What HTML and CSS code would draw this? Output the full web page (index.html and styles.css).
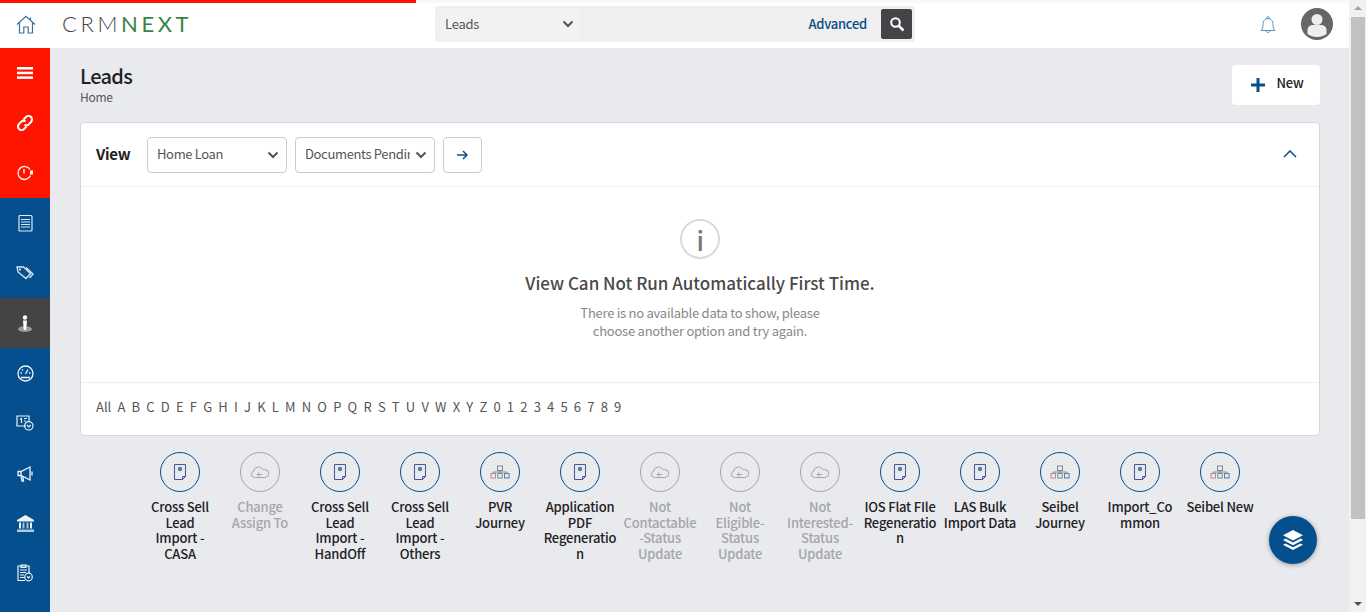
FILE: index.html
```html
<!DOCTYPE html>
<html lang="en">
<head>
    <meta charset="UTF-8">
    <title>Leads</title>
    <link rel="stylesheet" href="styles.css">
</head>
<body>
    <svg class="sprites" width="0" height="0">
        <symbol id="i-doc" viewBox="0 0 16 18">
            <path d="M2.500 1.500h11v12l-3 3h-8z" fill="none" stroke="currentColor" stroke-width="1"/>
            <path d="M13.500 13.500h-3v3" fill="none" stroke="currentColor" stroke-width="1"/>
            <circle cx="8" cy="6" r="2.200" fill="#4a7fae"/>
        </symbol>
        <symbol id="i-cloud" viewBox="0.600 0 20 14">
            <path d="M5 12.500a3.200 3.200 0 0 1-.6-6.300 4.600 4.600 0 0 1 8.800-1.600 3.400 3.400 0 0 1 2.200 0 3.900 3.900 0 0 1 .1 7.900z" fill="none" stroke="currentColor" stroke-width="1"/>
            <path d="M7 9.500h6M10 7.500l-2 2 2 2" fill="none" stroke="currentColor" stroke-width="1"/>
        </symbol>
        <symbol id="i-org" viewBox="0 0 20 14">
            <g fill="none" stroke-width="1">
                <rect x="7.500" y="1" width="5" height="4.500" stroke="#7d8794"/>
                <rect x="1" y="8.500" width="4.500" height="4.500" stroke="#c08a7a"/>
                <rect x="7.800" y="8.500" width="4.500" height="4.500" stroke="#7d8794"/>
                <rect x="14.500" y="8.500" width="4.500" height="4.500" stroke="#4a7fae"/>
                <path d="M10 5.500v3M3.200 8.500v-1.500h13.600v1.500" stroke="#7d8794"/>
            </g>
        </symbol>
        <symbol id="i-chev" viewBox="0 0 12 8">
            <path d="M1.500 1.500 6 6l4.500-4.500" fill="none" stroke="currentColor" stroke-width="2"/>
        </symbol>
    </svg>

    <div class="app">
        <div class="page">
            <header class="topbar">
                <div class="progress"><div class="progress-fill"></div></div>
                <a class="home-link">
                    <svg width="20" height="19" viewBox="0 0 20 19" fill="none" stroke="#3f6f9f" stroke-width="1.200">
                        <path d="M1 9.500 10 1.200l9 8.300M3.500 8v10h4.300v-6h4.400v6h4.300V8M14.500 2.500v3"/>
                    </svg>
                </a>
                <div class="logo">CRM<span class="logo-green">NEXT</span></div>
                <div class="global-search">
                    <div class="module-select">
                        <span class="module-text">Leads</span>
                        <svg class="chev" width="12" height="8"><use href="#i-chev"/></svg>
                    </div>
                    <a class="advanced">Advanced</a>
                    <button class="search-btn">
                        <svg width="16" height="16" viewBox="0 0 16 16" fill="none" stroke="#fff">
                            <circle cx="6.500" cy="6.500" r="4.300" stroke-width="2"/>
                            <path d="m10 10 4.500 4.500" stroke-width="2.500"/>
                        </svg>
                    </button>
                </div>
                <div class="top-right">
                    <svg width="16" height="19" viewBox="0 0 16 19" fill="none" stroke="#5b8fc0" stroke-width="1">
                        <path d="M1 15.500c1.500-1.500 2-3 2-6 0-3.500 2-6 5-6s5 2.500 5 6c0 3 .5 4.500 2 6z"/>
                        <path d="M6.500 3.500c0-2.500 3-2.500 3 0M6 15.500c0 2.700 4 2.700 4 0"/>
                    </svg>
                    <div class="avatar">
                        <svg width="32" height="32" viewBox="0 0 32 32">
                            <circle cx="16" cy="16" r="16" fill="#666"/>
                            <circle cx="16" cy="11.500" r="5.500" fill="#eee"/>
                            <path d="M6.500 26v-4c0-3.500 3-5 5-5h9c2 0 5 1.500 5 5v4c-2.500 2-6 3-9.500 3s-7-1-9.500-3z" fill="#eee"/>
                        </svg>
                    </div>
                </div>
            </header>

            <div class="layout">
                <nav class="sidebar">
                    <div class="nav-item red">
                        <svg width="16" height="12" viewBox="0 0 16 12" fill="#fff"><rect width="16" height="2.500"/><rect y="4.700" width="16" height="2.500"/><rect y="9.400" width="16" height="2.500"/></svg>
                    </div>
                    <div class="nav-item red">
                        <svg width="18" height="18" viewBox="0 0 18 18" fill="none" stroke="#fff" stroke-width="2">
                            <path d="M7.500 5.500 10 3a3 3 0 0 1 5 5l-2.500 2.500a3 3 0 0 1-4 0"/>
                            <path d="M10.500 12.500 8 15a3 3 0 0 1-5-5l2.500-2.500a3 3 0 0 1 4 0"/>
                        </svg>
                    </div>
                    <div class="nav-item red">
                        <svg width="18" height="16" viewBox="0 0 18 16" fill="none" stroke="#fff" stroke-width="1.300">
                            <path d="M14.500 10.500A6.500 6.500 0 1 1 14 4.500"/>
                            <path d="M8 4v4.500"/>
                            <rect x="14" y="5.500" width="3" height="4" fill="#fff" stroke="none"/>
                        </svg>
                    </div>
                    <div class="nav-item">
                        <svg width="15" height="18" viewBox="0 0 15 18" fill="none" stroke="#dfe8f2" stroke-width="1.200">
                            <rect x="1" y="1.500" width="13" height="15.500" rx="1"/>
                            <path d="M3 5.500h9M3 8h9M3 10.500h9M3 13h9"/>
                        </svg>
                    </div>
                    <div class="nav-item">
                        <svg width="18" height="14" viewBox="0 0 18 14" fill="none" stroke="#dfe8f2" stroke-width="1.300">
                            <path d="M1 1h6.500l7 6.500-4.500 5L2 6z"/>
                            <path d="M10 1.500l7 6.500-3.500 4"/>
                            <circle cx="4" cy="3.500" r="1" fill="#fff" stroke="none"/>
                        </svg>
                    </div>
                    <div class="nav-item active">
                        <svg width="16" height="17" viewBox="0 0 16 17">
                            <ellipse cx="8" cy="14" rx="7" ry="3" fill="#9a9a9a"/>
                            <circle cx="8" cy="2.500" r="2.200" fill="#fff"/>
                            <path d="M6 5.500h4l-.8 9.500H6.800z" fill="#fff"/>
                        </svg>
                    </div>
                    <div class="nav-item">
                        <svg width="17" height="17" viewBox="0 0 17 17" fill="none" stroke="#eef3f8" stroke-width="1.300">
                            <circle cx="8.500" cy="8.500" r="7.500"/>
                            <path d="M4 12.500h9M8.500 9l2.500-4.500M3.500 8h1.500M12 8h1.500M5 4.500l1 1"/>
                        </svg>
                    </div>
                    <div class="nav-item">
                        <svg width="18" height="16" viewBox="0 0 18 16" fill="none" stroke="#eef3f8" stroke-width="1.200">
                            <path d="M10 11H1V1h12v5"/>
                            <path d="M4 4.500l1.500-1V8M8 3.500h3M8 6h2"/>
                            <circle cx="12.800" cy="10.800" r="4.200"/>
                            <path d="M11 10l1.800 1.800 1.800-1.800"/>
                        </svg>
                    </div>
                    <div class="nav-item">
                        <svg width="16" height="17" viewBox="0 0 16 17" fill="none" stroke="#eef3f8" stroke-width="1.300">
                            <path d="M1 6.500v4h3l9 4.500V2L4 6.500z"/>
                            <path d="M4 6.500v4M4 11l1 5h1.500l-.5-4.500"/>
                            <path d="M15 6.500v4"/>
                        </svg>
                    </div>
                    <div class="nav-item">
                        <svg width="17" height="17" viewBox="0 0 17 17" fill="#eef3f8">
                            <path d="M8.500 0 17 5v1.500H0V5z"/>
                            <rect x="2" y="7.500" width="2" height="6"/><rect x="5.500" y="7.500" width="2" height="6" opacity=".7"/>
                            <rect x="9.500" y="7.500" width="2" height="6" opacity=".7"/><rect x="13" y="7.500" width="2" height="6"/>
                            <rect y="14.500" width="17" height="2.500" opacity=".75"/>
                        </svg>
                    </div>
                    <div class="nav-item">
                        <svg width="16" height="18" viewBox="0 0 16 18" fill="none" stroke="#eef3f8" stroke-width="1.200">
                            <path d="M8 16.500H1V2h11v7"/>
                            <path d="M4 1h5v2.500H4zM3 6h7M3 8.500h6M3 11h4M3 13.500h4"/>
                            <circle cx="11.500" cy="13" r="3.800"/>
                            <path d="M10 12.500l1.500 1.500 1.500-1.500"/>
                        </svg>
                    </div>
                </nav>

                <main class="content">
                    <div class="page-head">
                        <div>
                            <h1 class="page-title">Leads</h1>
                            <div class="crumb">Home</div>
                        </div>
                        <button class="new-btn">
                            <svg width="14" height="14" viewBox="0 0 14 14" fill="#054f8f"><rect x="5.500" width="3" height="14"/><rect y="5.500" width="14" height="3"/></svg>
                            <span class="new-text">New</span>
                        </button>
                    </div>

                    <section class="card">
                        <div class="card-head">
                            <span class="view-label">View</span>
                            <div class="select">
                                <span class="select-text">Home Loan</span>
                                <svg class="chev" width="12" height="8"><use href="#i-chev"/></svg>
                            </div>
                            <div class="select">
                                <span class="select-text">Documents Pending</span>
                                <svg class="chev" width="12" height="8"><use href="#i-chev"/></svg>
                            </div>
                            <button class="go-btn">
                                <svg width="11" height="10" viewBox="0 0 11 10" fill="none" stroke="#054f8f" stroke-width="1.500"><path d="M0 5h10M6 1l4 4-4 4"/></svg>
                            </button>
                            <svg class="collapse" width="14" height="8" viewBox="0 0 14 8" fill="none" stroke="#054f8f" stroke-width="1.500"><path d="M1 7l6-6 6 6"/></svg>
                        </div>
                        <div class="empty">
                            <div class="info-circle">i</div>
                            <h2 class="empty-title">View Can Not Run Automatically First Time.</h2>
                            <p class="empty-text">There is no available data to show, please<br>choose another option and try again.</p>
                        </div>
                        <div class="alpha">
                            <span>All</span><span>A</span><span>B</span><span>C</span><span>D</span><span>E</span><span>F</span><span>G</span><span>H</span><span>I</span><span>J</span><span>K</span><span>L</span><span>M</span><span>N</span><span>O</span><span>P</span><span>Q</span><span>R</span><span>S</span><span>T</span><span>U</span><span>V</span><span>W</span><span>X</span><span>Y</span><span>Z</span><span>0</span><span>1</span><span>2</span><span>3</span><span>4</span><span>5</span><span>6</span><span>7</span><span>8</span><span>9</span>
                        </div>
                    </section>

                    <div class="actions">
                        <div class="action">
                            <div class="action-icon"><svg class="doc" width="16" height="18"><use href="#i-doc"/></svg></div>
                            <div class="action-label">Cross Sell Lead Import&nbsp;- CASA</div>
                        </div>
                        <div class="action disabled">
                            <div class="action-icon"><svg width="20" height="14"><use href="#i-cloud"/></svg></div>
                            <div class="action-label">Change Assign To</div>
                        </div>
                        <div class="action">
                            <div class="action-icon"><svg class="doc" width="16" height="18"><use href="#i-doc"/></svg></div>
                            <div class="action-label">Cross Sell Lead Import&nbsp;- HandOff</div>
                        </div>
                        <div class="action">
                            <div class="action-icon"><svg class="doc" width="16" height="18"><use href="#i-doc"/></svg></div>
                            <div class="action-label">Cross Sell Lead Import&nbsp;- Others</div>
                        </div>
                        <div class="action">
                            <div class="action-icon"><svg width="20" height="14"><use href="#i-org"/></svg></div>
                            <div class="action-label">PVR Journey</div>
                        </div>
                        <div class="action">
                            <div class="action-icon"><svg class="doc" width="16" height="18"><use href="#i-doc"/></svg></div>
                            <div class="action-label">Application PDF Regeneration</div>
                        </div>
                        <div class="action disabled">
                            <div class="action-icon"><svg width="20" height="14"><use href="#i-cloud"/></svg></div>
                            <div class="action-label">Not Contactable -Status Update</div>
                        </div>
                        <div class="action disabled">
                            <div class="action-icon"><svg width="20" height="14"><use href="#i-cloud"/></svg></div>
                            <div class="action-label">Not<br>Eligible-Status Update</div>
                        </div>
                        <div class="action disabled">
                            <div class="action-icon"><svg width="20" height="14"><use href="#i-cloud"/></svg></div>
                            <div class="action-label">Not Interested-Status Update</div>
                        </div>
                        <div class="action">
                            <div class="action-icon"><svg class="doc" width="16" height="18"><use href="#i-doc"/></svg></div>
                            <div class="action-label">IOS Flat FIle Regeneration</div>
                        </div>
                        <div class="action">
                            <div class="action-icon"><svg class="doc" width="16" height="18"><use href="#i-doc"/></svg></div>
                            <div class="action-label">LAS Bulk Import Data</div>
                        </div>
                        <div class="action">
                            <div class="action-icon"><svg width="20" height="14"><use href="#i-org"/></svg></div>
                            <div class="action-label">Seibel Journey</div>
                        </div>
                        <div class="action">
                            <div class="action-icon"><svg class="doc" width="16" height="18"><use href="#i-doc"/></svg></div>
                            <div class="action-label">Import_Common</div>
                        </div>
                        <div class="action">
                            <div class="action-icon"><svg width="20" height="14"><use href="#i-org"/></svg></div>
                            <div class="action-label">Seibel New</div>
                        </div>
                    </div>

                    <button class="fab">
                        <svg width="22" height="20" viewBox="0 0 22 20" fill="#fff">
                            <path d="M11 0l10 5.200-10 5.200L1 5.200z"/>
                            <path d="M3.500 8.600 1 10l10 5.200L21 10l-2.500-1.400L11 12.500z"/>
                            <path d="M3.500 13.400 1 14.800 11 20l10-5.200-2.500-1.400L11 17.300z"/>
                        </svg>
                    </button>
                </main>
            </div>
        </div>

        <div class="scrollbar">
            <div class="arrow-up"></div>
            <div class="thumb"></div>
            <div class="arrow-down"></div>
        </div>
    </div>
</body>
</html>
```

FILE: styles.css
```css
* {
    box-sizing: border-box;
}
html, body {
    margin: 0;
    height: 100%;
    overflow: hidden;
}
body {
    font-family: "Noto Sans CJK SC", "Noto Sans", sans-serif;
    font-size: 13px;
    letter-spacing: -0.25px;
    color: #222;
    background-color: #e9eaee;
}
button {
    font-family: inherit;
    letter-spacing: inherit;
    cursor: pointer;
}
.sprites {
    position: absolute;
}
.app {
    display: flex;
    height: 612px;
}
.page {
    width: 1349px;
    display: flex;
    flex-direction: column;
}

/* top bar */
.topbar {
    height: 48px;
    background-color: #fff;
    display: flex;
    align-items: center;
    position: relative;
}
.progress {
    position: absolute;
    left: 0;
    top: 0;
    width: 100%;
    height: 3px;
    background-color: #f9f9f9;
}
.progress-fill {
    width: 416px;
    height: 3px;
    background-color: #ff1400;
}
.home-link {
    width: 52px;
    display: flex;
    justify-content: center;
}
.logo {
    margin-left: 10px;
    margin-bottom: 2px;
    width: 373px;
    font-family: "Lato", sans-serif;
    font-weight: 300;
    font-size: 22px;
    letter-spacing: 3.600px;
    color: #444;
}
.logo-green {
    color: #3b8443;
    font-weight: 400;
}
.global-search {
    width: 480px;
    height: 36px;
    background-color: #efefef;
    border-radius: 4px;
    display: flex;
    align-items: center;
    padding: 3px;
}
.module-select {
    width: 141px;
    height: 32px;
    margin-left: 2px;
    background-color: #f2f2f2;
    border-radius: 4px;
    padding: 0 7px 0 5px;
    display: flex;
    align-items: center;
    justify-content: space-between;
    color: #555;
}
.module-text {
    margin-bottom: 2px;
}
.chev {
    color: #555;
}
.advanced {
    margin-left: auto;
    margin-right: 14px;
    margin-bottom: 2px;
    color: #0a4a8a;
    font-weight: 500;
}
.search-btn {
    width: 31px;
    height: 30px;
    border: none;
    border-radius: 2px;
    background-color: #444448;
    display: flex;
    align-items: center;
    justify-content: center;
    padding: 0;
}
.top-right {
    margin-left: auto;
    margin-right: 16px;
    display: flex;
    align-items: center;
    gap: 25px;
}
.avatar {
    width: 32px;
    height: 32px;
}

/* sidebar */
.layout {
    flex: 1;
    display: flex;
    min-height: 0;
}
.sidebar {
    width: 50px;
    background-color: #054f8f;
    overflow: hidden;
}
.nav-item {
    height: 50px;
    display: flex;
    align-items: center;
    justify-content: center;
}
.nav-item.red {
    background-color: #ff1400;
}
.nav-item.active {
    background-color: #444;
}

/* content */
.content {
    flex: 1;
    padding: 16px 29px 0 30px;
    position: relative;
}
.page-head {
    display: flex;
    justify-content: space-between;
    height: 58px;
}
.page-title {
    margin: 0;
    font-size: 20px;
    line-height: 24px;
    font-weight: 500;
    letter-spacing: -0.7px;
    color: #222;
}
.crumb {
    font-size: 12px;
    line-height: 18px;
    margin-top: 0;
    letter-spacing: -0.3px;
    color: #555;
}
.new-btn {
    width: 88px;
    height: 40px;
    margin-top: 1px;
    border: none;
    border-radius: 4px;
    background-color: #fff;
    display: flex;
    align-items: center;
    justify-content: center;
    gap: 12px;
    font-size: 13px;
    font-weight: 500;
    color: #222;
    padding: 0 0 0 2px;
}
.new-text {
    margin-bottom: 5px;
}
.card {
    background-color: #fff;
    border: 1px solid #d8d8d8;
    border-radius: 4px;
    height: 314px;
    display: flex;
    flex-direction: column;
}
.card-head {
    height: 64px;
    display: flex;
    align-items: center;
    gap: 8px;
    padding: 0 22px 0 15px;
    border-bottom: 1px solid #f0f0f0;
}
.view-label {
    font-size: 15px;
    font-weight: 700;
    color: #222;
    width: 43px;
    margin-bottom: 2px;
}
.select {
    width: 140px;
    height: 36px;
    border: 1px solid #ccc;
    border-radius: 4px;
    padding: 0 7px 0 9px;
    display: flex;
    align-items: center;
    justify-content: space-between;
    gap: 5px;
    font-size: 13px;
    color: #555;
}
.select-text {
    flex: 1;
    overflow: hidden;
    white-space: nowrap;
    margin-bottom: 3px;
    letter-spacing: -0.35px;
}
.go-btn {
    width: 39px;
    height: 36px;
    border: 1px solid #ccc;
    border-radius: 4px;
    background-color: #fff;
    padding: 0;
    display: flex;
    align-items: center;
    justify-content: center;
}
.collapse {
    margin-left: auto;
    margin-bottom: 2px;
}
.empty {
    flex: 1;
    display: flex;
    flex-direction: column;
    align-items: center;
    padding-top: 32px;
}
.info-circle {
    width: 40px;
    height: 40px;
    border: 2px solid #d9d9de;
    border-radius: 50%;
    display: flex;
    align-items: center;
    justify-content: center;
    font-size: 26px;
    font-weight: 500;
    color: #777;
}
.empty-title {
    margin: 13px 0 0;
    font-size: 17px;
    line-height: 22px;
    font-weight: 500;
    letter-spacing: 0;
    color: #4a4a4a;
}
.empty-text {
    margin: 10px 0 0;
    font-size: 13px;
    line-height: 18px;
    text-align: center;
    color: #888;
}
.alpha {
    height: 53px;
    border-top: 1px solid #eee;
    padding: 0 15px 5px;
    display: flex;
    align-items: center;
    gap: 6.200px;
    font-size: 13px;
    letter-spacing: 0;
    color: #555;
}
.actions {
    display: flex;
    padding: 16px 0 0 60px;
}
.action {
    width: 80px;
    display: flex;
    flex-direction: column;
    align-items: center;
    color: #222;
}
.action-icon {
    width: 40px;
    height: 40px;
    border: 1.500px solid #054f8f;
    border-radius: 50%;
    display: flex;
    align-items: center;
    justify-content: center;
}
.action-icon .doc {
    color: #4b4f9e;
}
.action-label {
    width: 74.500px;
    margin-top: 7px;
    font-size: 13px;
    line-height: 15.600px;
    font-weight: 500;
    letter-spacing: -0.2px;
    text-align: center;
    overflow-wrap: anywhere;
}
.action.disabled {
    color: #a6a6a6;
}
.action.disabled .action-icon {
    border-color: #a6a6a6;
}
.fab {
    position: absolute;
    left: 1219px;
    top: 468px;
    width: 48px;
    height: 48px;
    border: none;
    border-radius: 50%;
    background-color: #054f8f;
    box-shadow: 0 1px 5px rgba(0,0,0,0.35);
    display: flex;
    align-items: center;
    justify-content: center;
    padding: 0;
}

/* scrollbar */
.scrollbar {
    width: 17px;
    background-color: #f1f1f1;
    display: flex;
    flex-direction: column;
    align-items: center;
}
.arrow-up {
    margin-top: 6px;
    border-left: 4px solid transparent;
    border-right: 4px solid transparent;
    border-bottom: 4px solid #a3a3a3;
}
.thumb {
    width: 14px;
    height: 502px;
    margin-top: 7px;
    margin-left: 1px;
    background-color: #c1c1c1;
}
.arrow-down {
    margin-top: auto;
    margin-bottom: 6px;
    border-left: 4px solid transparent;
    border-right: 4px solid transparent;
    border-top: 4px solid #505050;
}
```
